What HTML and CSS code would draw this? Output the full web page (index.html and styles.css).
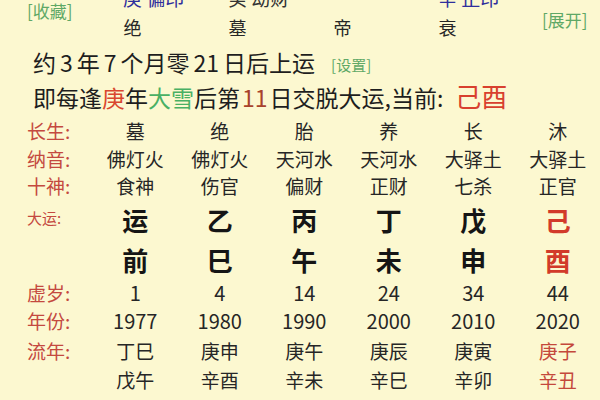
FILE: index.html
```html
<!DOCTYPE html>
<html lang="zh">
<head>
<meta charset="utf-8">
<link rel="stylesheet" href="styles.css">
</head>
<body>
<div class="page">
  <div class="head">
    <div class="fav link">[收藏]</div>
    <div class="pillars">
      <div class="shen">
        <span class="blue">庚 偏印</span>
        <span class="dark">癸 劫财</span>
        <span></span>
        <span class="blue">辛 正印</span>
      </div>
      <div class="zhang">
        <span>绝</span><span>墓</span><span>帝</span><span>衰</span>
      </div>
    </div>
    <div class="expand link">[展开]</div>
  </div>
  <div class="line1">约<span class="d">3</span>年<span class="d">7</span>个月零<span class="d">21</span>日后上运<span class="link set">[设置]</span></div>
  <div class="line2">即每逢<span class="red">庚</span>年<span class="green">大雪</span>后第<span class="brown d2">11</span>日交脱大运,当前:<span class="cur">己酉</span></div>

  <div class="table">
    <div class="lab">长生:</div>
    <div>墓</div><div>绝</div><div>胎</div><div>养</div><div>长</div><div>沐</div>

    <div class="lab">纳音:</div>
    <div>佛灯火</div><div>佛灯火</div><div>天河水</div><div>天河水</div><div>大驿土</div><div>大驿土</div>

    <div class="lab">十神:</div>
    <div>食神</div><div>伤官</div><div>偏财</div><div>正财</div><div>七杀</div><div>正官</div>

    <div class="lab small">大运:</div>
    <div class="big">运</div><div class="big">乙</div><div class="big">丙</div><div class="big">丁</div><div class="big">戊</div><div class="big hot">己</div>

    <div class="lab"></div>
    <div class="big">前</div><div class="big">巳</div><div class="big">午</div><div class="big">未</div><div class="big">申</div><div class="big hot">酉</div>

    <div class="lab">虚岁:</div>
    <div class="num">1</div><div class="num">4</div><div class="num">14</div><div class="num">24</div><div class="num">34</div><div class="num">44</div>

    <div class="lab">年份:</div>
    <div class="num">1977</div><div class="num">1980</div><div class="num">1990</div><div class="num">2000</div><div class="num">2010</div><div class="num">2020</div>

    <div class="lab">流年:</div>
    <div>丁巳</div><div>庚申</div><div>庚午</div><div>庚辰</div><div>庚寅</div><div class="warm">庚子</div>

    <div class="lab"></div>
    <div>戊午</div><div>辛酉</div><div>辛未</div><div>辛巳</div><div>辛卯</div><div class="warm">辛丑</div>
  </div>
</div>
</body>
</html>
```

FILE: styles.css
```css
html, body {
  margin: 0;
  padding: 0;
  background: #fcf8d0;
}
.page {
  width: 600px;
  height: 400px;
  overflow: hidden;
  font-family: "Noto Sans CJK SC", "Noto Sans", sans-serif;
  color: #262626;
  background: #fcf8d0;
}
.link {
  color: #5fa866;
  font-size: 16px;
  line-height: 18px;
}
.head {
  display: flex;
  height: 44px;
}
.fav {
  width: 53px;
  padding-left: 27px;
  padding-top: 2px;
  font-size: 17px;
  line-height: 17px;
}
.pillars {
  display: flex;
  flex-direction: column;
}
.shen, .zhang {
  display: grid;
  grid-template-columns: repeat(4, 105px);
}
.shen {
  margin-top: -15px;
  height: 26px;
  line-height: 26px;
  font-size: 19px;
}
.shen span {
  padding-left: 43px;
  white-space: nowrap;
}
.blue { color: #2f2f9c; }
.dark { color: #333; }
.zhang {
  line-height: 32px;
  font-size: 18px;
  text-align: center;
}
.expand {
  padding-left: 42px;
  padding-top: 11px;
  font-size: 17px;
}
.line1 {
  height: 36px;
  line-height: 36px;
  padding-left: 33px;
  font-size: 23px;
  color: #1e1e1e;
}
.d {
  padding: 0 4px;
}
.d2 {
  padding: 0 2px;
}
.set {
  margin-left: 16px;
  font-size: 15px;
  vertical-align: 1px;
}
.line2 {
  height: 32px;
  line-height: 32px;
  padding-left: 33px;
  font-size: 23px;
  color: #1e1e1e;
}
.red { color: #d9472f; }
.green { color: #49b064; }
.brown { color: #a8432c; }
.cur {
  color: #d8402e;
  font-size: 26px;
  margin-left: 12px;
}
.table {
  margin-top: 4px;
  display: grid;
  grid-template-columns: 93px repeat(6, 1fr);
  grid-template-rows: 29px 27px 28px 40px 39px 28px 28px 31px 28px;
  font-size: 19px;
  align-items: center;
  text-align: center;
}
.table > div {
  line-height: 24px;
}
.table .lab {
  text-align: left;
  padding-left: 27px;
  color: #c4493f;
  font-size: 19px;
}
.table .lab.small {
  font-size: 15px;
  align-self: start;
  padding-top: 6px;
}
.big {
  font-size: 26px;
  font-weight: bold;
  color: #151515;
}
.big.hot { color: #d23a2a; }
.num { font-size: 20px; }
.warm { color: #c4483b; }
```
